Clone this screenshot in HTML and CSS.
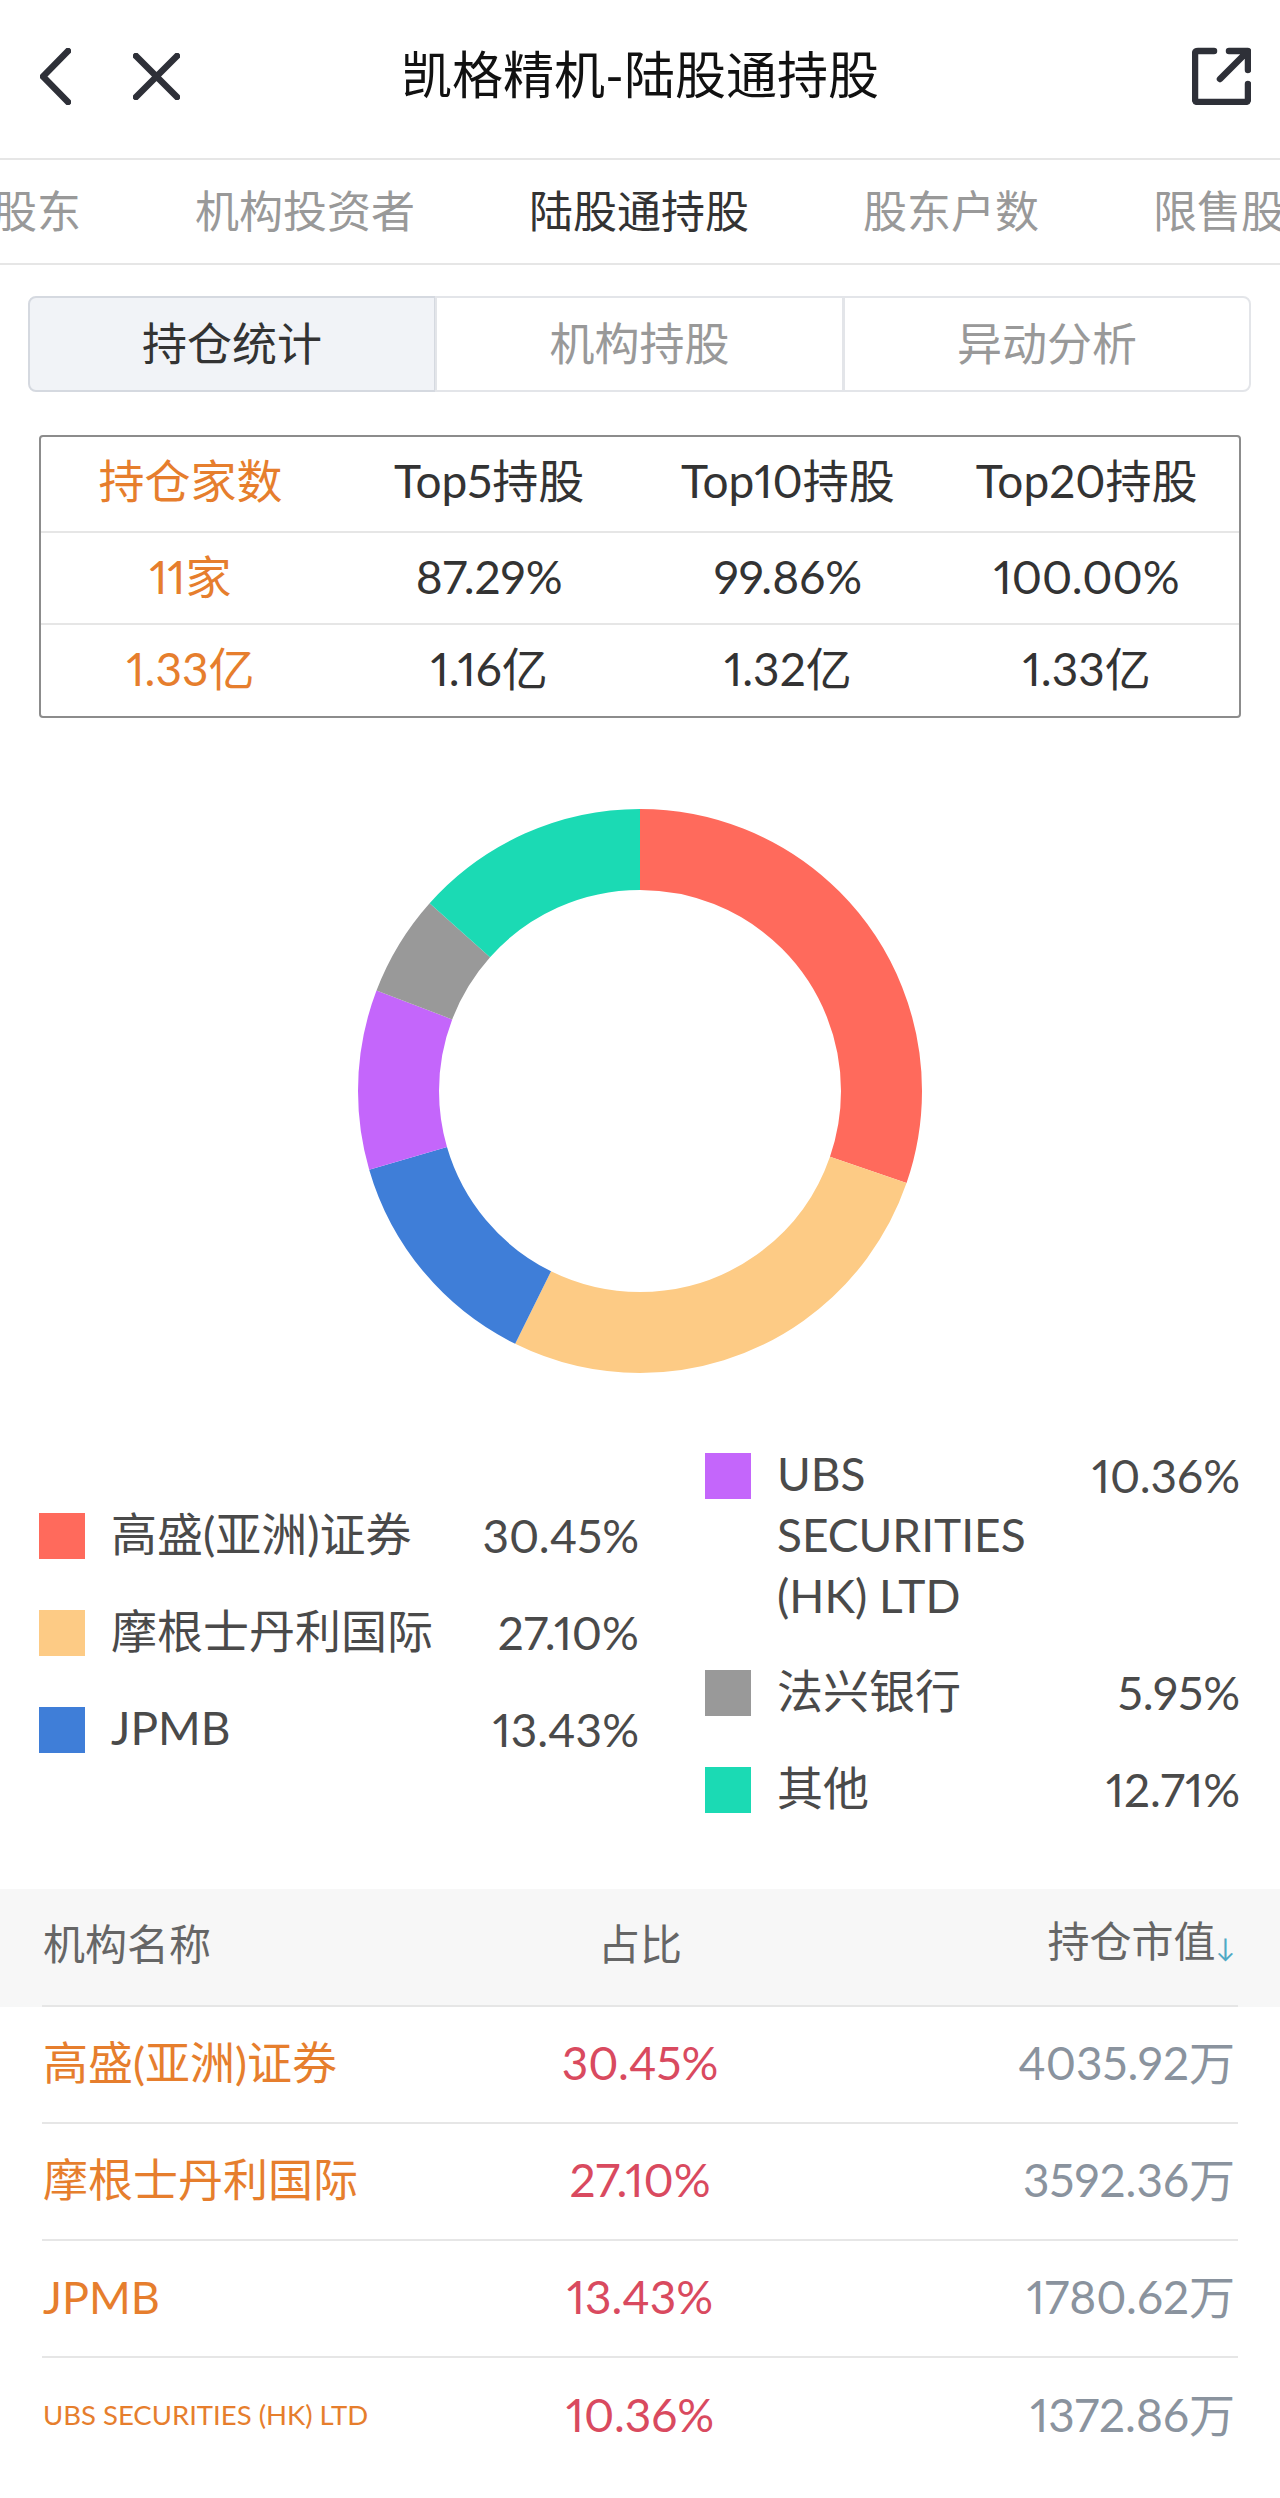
FILE: index.html
```html
<!DOCTYPE html>
<html lang="zh-CN">
<head>
    <meta charset="UTF-8">
    <meta name="viewport" content="width=device-width, initial-scale=1.0">
    <title>凯格精机-陆股通持股</title>
    <link rel="stylesheet" href="styles.css">
</head>
<body>
    <!-- Title bar -->
    <header class="topbar">
        <div class="topbar-left">
            <svg class="icon icon-back" viewBox="0 0 31 57"><path d="M28 3 L3 28.5 L28 54"/></svg>
            <svg class="icon icon-close" viewBox="0 0 47 47"><path d="M3 3 L44 44 M44 3 L3 44"/></svg>
        </div>
        <h1 class="title">凯格精机-陆股通持股</h1>
        <svg class="icon icon-share" viewBox="0 0 59 58"><path d="M22 4 H6 Q3 4 3 7 V52 Q3 55 6 55 H53 Q56 55 56 52 V37 M37 4 H56 V23 M55 5 L28 32"/></svg>
    </header>

    <!-- Section tabs -->
    <nav class="tabs">
        <span class="tab">股东</span>
        <span class="tab">机构投资者</span>
        <span class="tab active">陆股通持股</span>
        <span class="tab">股东户数</span>
        <span class="tab">限售股东</span>
    </nav>

    <div class="segments">
        <div class="segment active">持仓统计</div>
        <div class="segment">机构持股</div>
        <div class="segment">异动分析</div>
    </div>

    <!-- Holdings summary -->
    <div class="summary">
        <div class="summary-row">
            <span class="accent">持仓家数</span><span>Top5持股</span><span>Top10持股</span><span>Top20持股</span>
        </div>
        <div class="summary-row">
            <span class="accent">11家</span><span>87.29%</span><span>99.86%</span><span>100.00%</span>
        </div>
        <div class="summary-row">
            <span class="accent">1.33亿</span><span>1.16亿</span><span>1.32亿</span><span>1.33亿</span>
        </div>
    </div>

    <!-- Donut chart -->
    <div class="chart">
        <svg class="donut" viewBox="0 0 564 564">
            <g transform="rotate(-90 282 282)">
                <circle class="slice slice-red" cx="282" cy="282" r="241.5" pathLength="100" stroke-dasharray="30.3 69.7" stroke-dashoffset="0"/>
                <circle class="slice slice-orange" cx="282" cy="282" r="241.5" pathLength="100" stroke-dasharray="27 73" stroke-dashoffset="-30.3"/>
                <circle class="slice slice-blue" cx="282" cy="282" r="241.5" pathLength="100" stroke-dasharray="13.2 86.8" stroke-dashoffset="-57.3"/>
                <circle class="slice slice-purple" cx="282" cy="282" r="241.5" pathLength="100" stroke-dasharray="10.3 89.7" stroke-dashoffset="-70.5"/>
                <circle class="slice slice-gray" cx="282" cy="282" r="241.5" pathLength="100" stroke-dasharray="5.8 94.2" stroke-dashoffset="-80.8"/>
                <circle class="slice slice-teal" cx="282" cy="282" r="241.5" pathLength="100" stroke-dasharray="13.4 86.6" stroke-dashoffset="-86.6"/>
            </g>
        </svg>
    </div>

    <div class="legend">
        <div class="legend-col">
            <div class="legend-item"><i class="swatch bg-red"></i><span class="legend-name">高盛(亚洲)证券</span><span class="legend-value">30.45%</span></div>
            <div class="legend-item"><i class="swatch bg-orange"></i><span class="legend-name">摩根士丹利国际</span><span class="legend-value">27.10%</span></div>
            <div class="legend-item"><i class="swatch bg-blue"></i><span class="legend-name">JPMB</span><span class="legend-value">13.43%</span></div>
        </div>
        <div class="legend-col">
            <div class="legend-item"><i class="swatch bg-purple"></i><span class="legend-name">UBS SECURITIES (HK) LTD</span><span class="legend-value">10.36%</span></div>
            <div class="legend-item"><i class="swatch bg-gray"></i><span class="legend-name">法兴银行</span><span class="legend-value">5.95%</span></div>
            <div class="legend-item"><i class="swatch bg-teal"></i><span class="legend-name">其他</span><span class="legend-value">12.71%</span></div>
        </div>
    </div>

    <!-- Institution list -->
    <div class="list-head">
        <div class="list-row">
            <span class="col-name">机构名称</span>
            <span class="col-ratio">占比</span>
            <span class="col-value">持仓市值<b class="sort">↓</b></span>
        </div>
    </div>
    <div class="list">
        <div class="list-row">
            <span class="col-name">高盛(亚洲)证券</span><span class="col-ratio">30.45%</span><span class="col-value">4035.92万</span>
        </div>
        <div class="list-row">
            <span class="col-name">摩根士丹利国际</span><span class="col-ratio">27.10%</span><span class="col-value">3592.36万</span>
        </div>
        <div class="list-row">
            <span class="col-name">JPMB</span><span class="col-ratio">13.43%</span><span class="col-value">1780.62万</span>
        </div>
        <div class="list-row">
            <span class="col-name small">UBS SECURITIES (HK) LTD</span><span class="col-ratio">10.36%</span><span class="col-value">1372.86万</span>
        </div>
    </div>
</body>
</html>
```

FILE: styles.css
```css
* {
    box-sizing: border-box;
    margin: 0;
    padding: 0;
}

body {
    background: #fff;
    color: #333;
    font-family: 'Lato', 'Noto Sans CJK SC', sans-serif;
    font-size: 46px;
    font-variant-numeric: proportional-nums;
    overflow-x: hidden;
}

/* Title bar */
.topbar {
    height: 160px;
    border-bottom: 2px solid #e6e6e6;
    position: relative;
    display: flex;
    align-items: center;
    justify-content: space-between;
    padding: 0 29px 6px 40px;
}

.topbar-left {
    display: flex;
    align-items: center;
    gap: 62px;
}

.title {
    position: absolute;
    left: 0;
    right: 0;
    top: 48px;
    text-align: center;
    font-size: 51px;
    font-weight: 400;
    line-height: 54px;
    color: #111;
}

.icon {
    fill: none;
    stroke: #2e3038;
    stroke-width: 6.5;
    stroke-linecap: round;
    stroke-linejoin: round;
    display: block;
}

.icon-back { width: 31px; height: 57px; }
.icon-close { width: 47px; height: 47px; }
.icon-share { width: 59px; height: 58px; }

/* Section tabs */
.tabs {
    height: 105px;
    border-bottom: 2px solid #e6e6e6;
    display: flex;
    align-items: center;
    gap: 114px;
    margin-left: -7px;
    padding-bottom: 6px;
    font-size: 44px;
    white-space: nowrap;
    overflow: hidden;
    color: #999;
}

.tab.active {
    color: #333;
}

.segments {
    display: grid;
    grid-template-columns: 408px 408px 407px;
    margin: 31px 29px 0 28px;
    height: 96px;
    font-size: 45px;
    color: #999;
}

.segment {
    display: flex;
    align-items: center;
    justify-content: center;
    border: 2px solid #e3e5e9;
    margin-left: -1px;
    padding-bottom: 6px;
    background: #fff;
}

.segment:first-child {
    border-radius: 8px 0 0 8px;
    margin-left: 0;
}

.segment:last-child {
    border-radius: 0 8px 8px 0;
}

.segment.active {
    background: #f1f3f7;
    border-color: #d5d9e0;
    color: #333;
}

/* Holdings summary */
.summary {
    margin: 43px 39px 0;
    height: 283px;
    border: 2px solid #8c8c8c;
    border-radius: 4px;
    display: flex;
    flex-direction: column;
    line-height: 60px;
}

.summary-row {
    flex: 1;
    display: grid;
    grid-template-columns: repeat(4, 1fr);
    align-items: center;
    text-align: center;
    padding: 0 3px 3px 0;
}

.summary-row:first-child {
    padding-bottom: 6px;
}

.summary-row + .summary-row {
    border-top: 2px solid #e6e6e6;
}

.accent {
    color: #e67e2d;
}

/* Donut chart */
.chart {
    margin-top: 91px;
    display: flex;
    justify-content: center;
}

.donut {
    width: 564px;
    height: 564px;
    display: block;
}

.slice {
    fill: none;
    stroke-width: 81;
}

.slice-red { stroke: #ff6a5c; }
.slice-orange { stroke: #fdcb85; }
.slice-blue { stroke: #3f7ed8; }
.slice-purple { stroke: #c466fb; }
.slice-gray { stroke: #999; }
.slice-teal { stroke: #1bdab4; }

/* Legend */
.legend {
    margin: 72px 40px 0 39px;
    display: grid;
    grid-template-columns: 600px 535px;
    column-gap: 66px;
    align-items: center;
    color: #4a4a4a;
    line-height: 61px;
}

.legend-col {
    display: flex;
    flex-direction: column;
    gap: 36px;
}

.legend-item {
    display: flex;
    align-items: flex-start;
}

.swatch {
    flex: none;
    width: 46px;
    height: 46px;
    margin: 8px 26px 0 0;
}

.bg-red { background: #ff6a5c; }
.bg-orange { background: #fdcb85; }
.bg-blue { background: #3f7ed8; }
.bg-purple { background: #c466fb; }
.bg-gray { background: #999; }
.bg-teal { background: #1bdab4; }

.legend-name {
    flex: 1;
    margin-top: -2px;
}

.legend-value {
    flex: none;
    margin-left: 20px;
}

/* Institution list */
.list-head {
    margin-top: 69px;
    background: #f7f7f7;
    font-size: 42px;
    color: #666;
    padding: 0 42px;
}

.list {
    padding: 0 42px;
    color: #8a939e;
}

.list-row {
    display: grid;
    grid-template-columns: 1fr 1fr 1fr;
    align-items: center;
    height: 117px;
    line-height: 60px;
    padding-bottom: 4px;
    border-bottom: 2px solid #e6e6e6;
}

.list-head .list-row {
    height: 118px;
    padding-bottom: 6px;
}

.list .list-row:last-child {
    border-bottom: 0;
}

.col-name {
    padding-left: 1px;
}

.col-ratio {
    text-align: center;
}

.col-value {
    text-align: right;
    padding-right: 3px;
}

.list .col-name {
    color: #e67e2d;
    font-size: 45px;
}

.list .col-name.small {
    font-size: 27.5px;
}

.list .col-ratio {
    color: #d94a5f;
}

.sort {
    font-size: 26px;
    font-weight: 400;
    color: #4fa9c5;
}
```
